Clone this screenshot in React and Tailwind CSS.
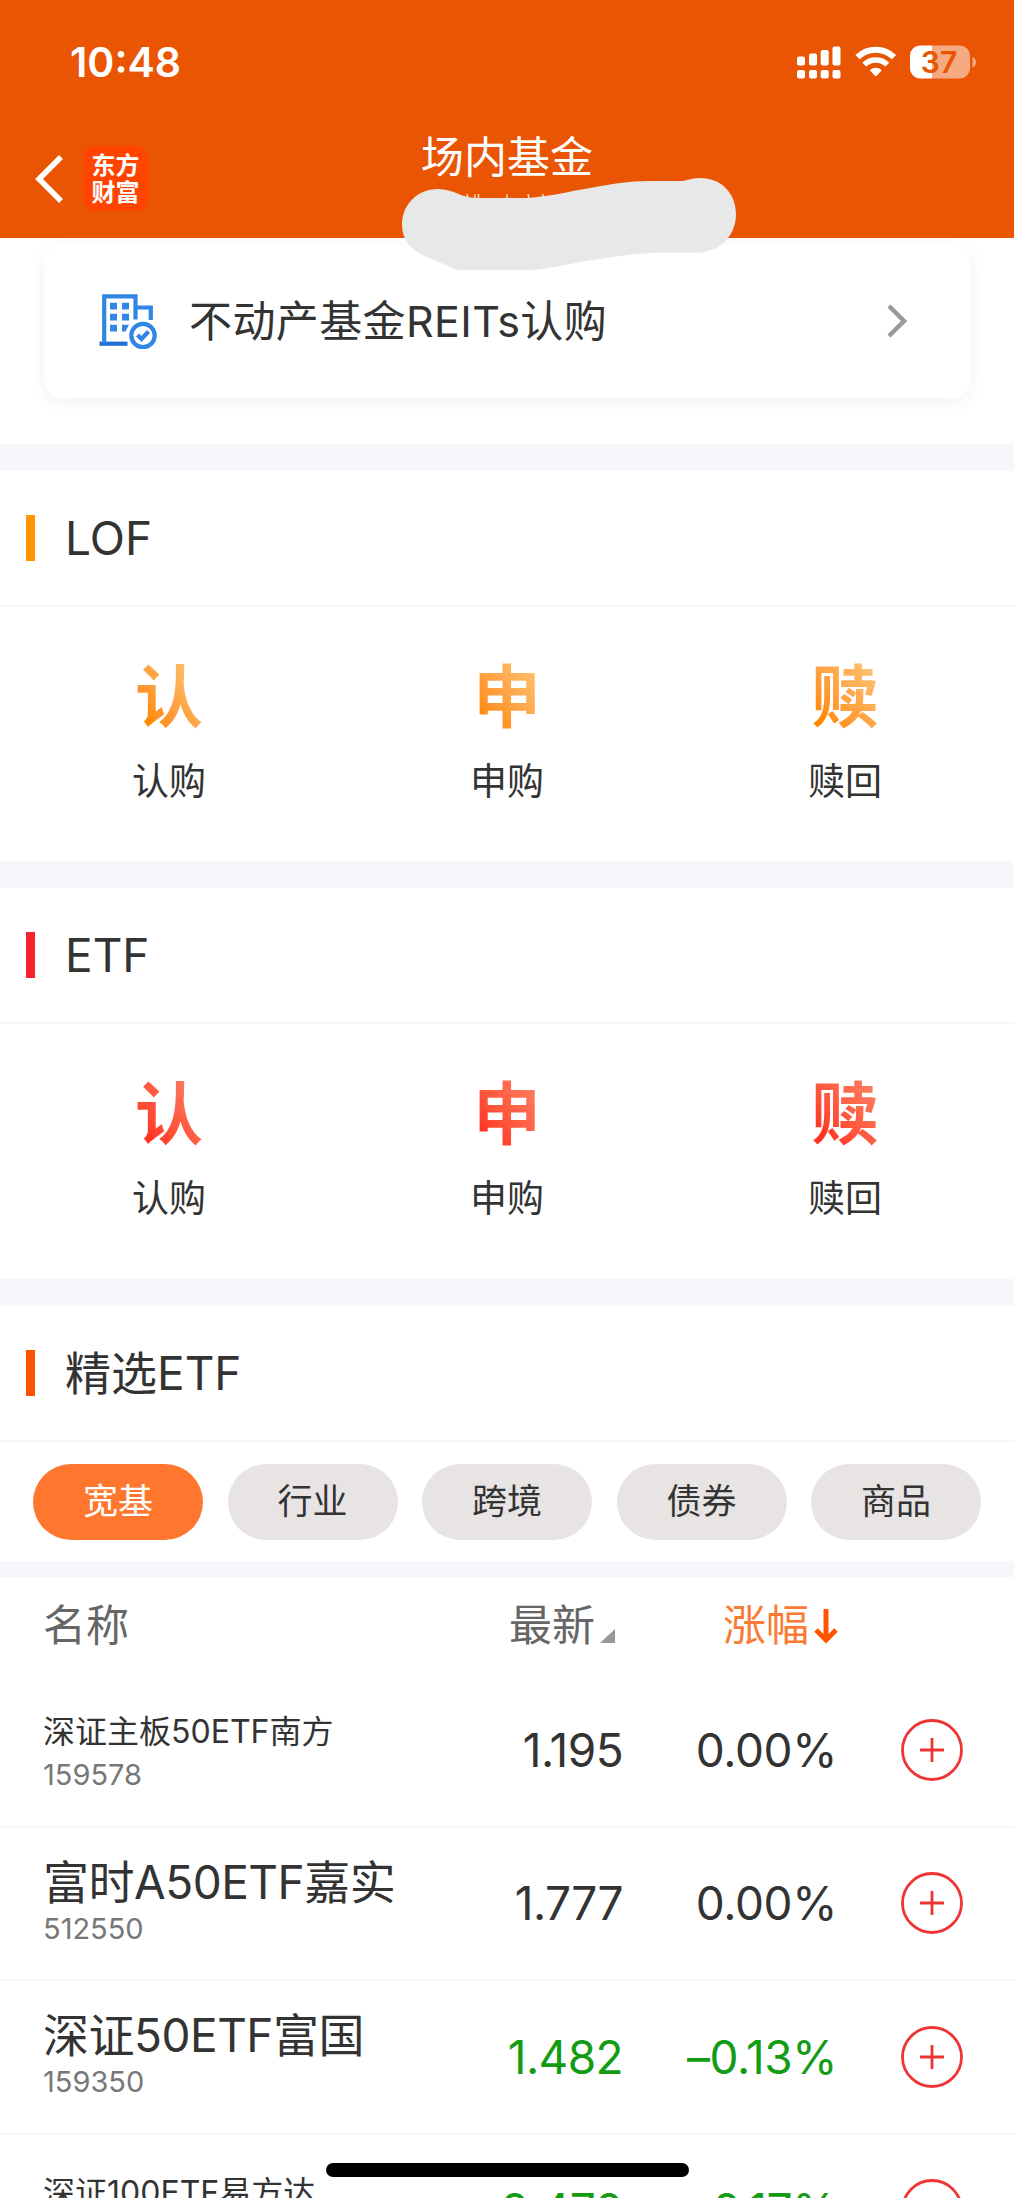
const sections = [
  {
    title: "LOF",
    bar: "bg-[#ff9500]",
    gradient: "from-[#ff8a00] from-20% to-[#ffbf6b] to-85%",
    height: "h-[254px]",
  },
  {
    title: "ETF",
    bar: "bg-[#f5222d]",
    gradient: "from-[#ff3322] from-20% to-[#ff7a5c] to-85%",
    height: "h-[255px]",
  },
];

const actions = [
  { icon: "认", label: "认购" },
  { icon: "申", label: "申购" },
  { icon: "赎", label: "赎回" },
];

const tabs = ["宽基", "行业", "跨境", "债券", "商品"];

const funds = [
  { name: "深证主板50ETF南方", code: "159578", price: "1.195", change: "0.00%", small: true },
  { name: "富时A50ETF嘉实", code: "512550", price: "1.777", change: "0.00%" },
  { name: "深证50ETF富国", code: "159350", price: "1.482", change: "–0.13%", down: true },
  { name: "深证100ETF易方达", code: "", price: "2.470", change: "–0.17%", small: true, down: true },
];

function StatusIcons() {
  return (
    <svg width="180" height="34" viewBox="0 0 180 34" fill="#fff">
      {/* signal */}
      <rect x="0" y="11.5" width="8" height="9" rx="2" />
      <rect x="12" y="8.5" width="8" height="12" rx="2" />
      <rect x="23.7" y="5" width="8" height="15.5" rx="2" />
      <rect x="35.5" y="1.5" width="8" height="19" rx="2" />
      <rect x="0" y="25" width="8" height="8.5" rx="2" />
      <rect x="12" y="25" width="8" height="8.5" rx="2" />
      <rect x="23.7" y="25" width="8" height="8.5" rx="2" />
      <rect x="35.5" y="25" width="8" height="8.5" rx="2" />
      {/* wifi */}
      <path d="M60.5 12.2a26 26 0 0 1 36.5 0" fill="none" stroke="#fff" strokeWidth="6" />
      <path d="M67.3 19.6a16.5 16.5 0 0 1 23 0" fill="none" stroke="#fff" strokeWidth="5.5" />
      <path d="M72.8 25.2a8.6 8.6 0 0 1 12 0l-4.8 5.2a1.6 1.6 0 0 1-2.4 0z" />
      {/* battery */}
      <path d="M123 .5h12v33h-12a10 10 0 0 1-10-10v-13a10 10 0 0 1 10-10z" />
      <path d="M135 .5h28a10 10 0 0 1 10 10v13a10 10 0 0 1-10 10h-28z" opacity=".5" />
      <path d="M175.5 12c4.5 1.5 4.5 9 0 10.5z" opacity=".5" />
      <text
        x="142"
        y="27.5"
        textAnchor="middle"
        fill="#ea5504"
        fontFamily="Inter, sans-serif"
        fontWeight="600"
        fontSize="30"
      >
        37
      </text>
    </svg>
  );
}

function BuildingIcon() {
  return (
    <svg width="60" height="56" viewBox="0 0 60 56" fill="none" stroke="#2f86e4" strokeWidth="4.2">
      <path d="M1.5 50.7h28" stroke="#1f6fd8" />
      <path d="M6.2 50V3.4h31.3v23" />
      <path d="M37.5 14.5h15.3v12.5" />
      <g fill="#2f86e4" stroke="none">
        <path d="M12 9.7h7v6.7h-7zM24 9.7h7v6.7h-7zM12 20.7h7v6.7h-7zM24 20.7h7v6.7h-7zM12 31.7h7v6.7h-7zM24 31.7h7l-3.5 6.7H24z" />
      </g>
      <circle cx="45" cy="42.5" r="11.7" />
      <path d="M39.5 42l4 4 7-7.5" />
    </svg>
  );
}

// Smear that hides the account line under the title
function Redaction() {
  return (
    <svg className="absolute left-[400px] top-[176px]" width="340" height="98" viewBox="400 176 340 98">
      <path
        d="M467 194l1 4M475 194v4M478.5 194v4M507 194.5v4M528 194l1 4M543 194v4"
        stroke="#fbd9c4"
        strokeWidth="1.5"
      />
      <path
        d="M402 225C402 204 418 189 438 189C454 189 461 198 476 198H526C546 197 567 192 590 188C612 184 628 181 650 181H683C688 179.5 694 178 700 178C721 178 736 193 736 214C736 234 722 252 697 252.5H662C640 253 620 256 600 259C578 262 557 267 535 270H457C447 266 440 262 429 258C413 252 402 241 402 225Z"
        fill="#e8e8e8"
      />
    </svg>
  );
}

function Header() {
  return (
    <header className="relative h-[238px] shrink-0 bg-[#ea5504] text-white">
      <div className="flex h-[124px] items-center justify-between pl-[70px] pr-[37px]">
        <span className="text-[41px] font-semibold leading-none">10:48</span>
        <StatusIcons />
      </div>
      <div className="grid h-[114px] grid-cols-[1fr_auto_1fr] items-start">
        <div className="flex items-center gap-[20px] pl-[35px] pt-[22px]">
          <svg width="28" height="48" viewBox="0 0 28 48" fill="none" stroke="#fff" strokeWidth="5.5">
            <path d="M26 2L4 24l22 22" />
          </svg>
          <div className="flex h-[65px] w-[65px] flex-col items-center justify-center rounded-[12px] bg-[#ff4400] text-[24px] font-bold leading-[27px]">
            <span>东方</span>
            <span>财富</span>
          </div>
        </div>
        <h1 className="pt-[6px] text-[43px] leading-[54px]">场内基金</h1>
      </div>
      <Redaction />
    </header>
  );
}

function SectionTitle({ title, bar }) {
  return (
    <div className="flex h-[136px] items-center gap-[30px] border-b-2 border-[#f6f6f8] pl-[26px]">
      <span className={`h-[46px] w-[9px] ${bar}`} />
      <h2 className="text-[46px] leading-none">{title}</h2>
    </div>
  );
}

function FundRow({ fund }) {
  return (
    <li className="grid h-[153.5px] grid-cols-[440px_183px_214px_1fr] items-center border-b-2 border-[#f6f6f8]">
      <div className="pl-[43px]">
        <p
          className={
            fund.small ? "pt-[7px] text-[32px] leading-[43px]" : "text-[46px] leading-[50px] tracking-[-0.5px]"
          }
        >
          {fund.name}
        </p>
        <p className="h-[43px] text-[29px] leading-[43px] text-[#777]">{fund.code}</p>
      </div>
      <span
        className={`text-right text-[46px] leading-none tracking-[-0.6px] ${fund.down ? "text-[#149b14]" : ""}`}
      >
        {fund.price}
      </span>
      <span
        className={`text-right text-[46px] leading-none tracking-[-0.4px] ${fund.down ? "text-[#149b14]" : ""}`}
      >
        {fund.change}
      </span>
      <svg className="ml-[63px]" width="64" height="64" viewBox="0 0 64 64" fill="none" stroke="#ef3434" strokeWidth="2.8">
        <circle cx="32" cy="32" r="29.5" />
        <path d="M20 32h24M32 20v24" />
      </svg>
    </li>
  );
}

export default function App() {
  return (
    <div className="relative flex h-[2198px] w-[1014px] flex-col overflow-hidden bg-white font-[Inter,'Noto_Sans_CJK_SC',sans-serif] text-[#333]">
      <Header />

      <div className="h-[206px] shrink-0 px-[44px] pt-[6px]">
        <div className="flex h-[154px] items-center rounded-[18px] bg-white pl-[54px] pr-[60px] shadow-[0_4px_18px_rgba(0,0,0,0.06)]">
          <BuildingIcon />
          <span className="ml-[31px] flex-1 text-[43px] leading-none tracking-[0.4px]">不动产基金REITs认购</span>
          <svg width="24" height="36" viewBox="0 0 24 36" fill="none" stroke="#999" strokeWidth="4.5">
            <path d="M3 3l15 15L3 33" />
          </svg>
        </div>
      </div>

      {sections.map((s) => (
        <section key={s.title} className="shrink-0 border-t-[27px] border-[#f6f7fa]">
          <SectionTitle title={s.title} bar={s.bar} />
          <div className={`grid grid-cols-3 pt-[50px] text-center ${s.height}`}>
            {actions.map((a) => (
              <div key={a.label} className="flex flex-col items-center">
                <span
                  className={`bg-linear-to-tr bg-clip-text text-[68px] font-bold leading-[80px] text-transparent ${s.gradient}`}
                >
                  {a.icon}
                </span>
                <span className="mt-[21px] text-[37px] leading-[48px]">{a.label}</span>
              </div>
            ))}
          </div>
        </section>
      ))}

      <section className="shrink-0 border-t-[27px] border-[#f6f7fa]">
        <SectionTitle title="精选ETF" bar="bg-[#ff5000]" />
        <div className="flex h-[119px] items-center justify-between px-[33px]">
          {tabs.map((t, i) => (
            <button
              key={t}
              className={`h-[76px] w-[170px] rounded-full text-[35px] leading-none ${
                i === 0 ? "bg-[#ff772e] text-white" : "bg-[#e8e4e4]"
              }`}
            >
              {t}
            </button>
          ))}
        </div>
      </section>

      <section className="shrink-0 border-t-[16px] border-[#f6f7fa]">
        <div className="grid h-[97px] grid-cols-[440px_183px_214px_1fr] items-center text-[43px] leading-none text-[#666]">
          <span className="pl-[43px]">名称</span>
          <span className="flex items-end justify-end gap-[5px] pr-[8px]">
            最新
            <svg className="mb-[4px]" width="15" height="14" viewBox="0 0 15 14" fill="#999">
              <path d="M15 0v14H0z" />
            </svg>
          </span>
          <span className="-mr-[1px] flex items-center justify-end gap-[5px] text-[#fb7a35]">
            涨幅
            <svg width="24" height="36" viewBox="0 0 24 36" fill="none" stroke="#ff5500" strokeWidth="5">
              <path d="M12 1v32M2 22l10 10 10-10" />
            </svg>
          </span>
        </div>
        <ul>
          {funds.map((f) => (
            <FundRow key={f.name} fund={f} />
          ))}
        </ul>
      </section>

      {/* home indicator */}
      <div className="absolute bottom-[21px] left-[326px] h-[14px] w-[363px] rounded-full bg-black" />
    </div>
  );
}
